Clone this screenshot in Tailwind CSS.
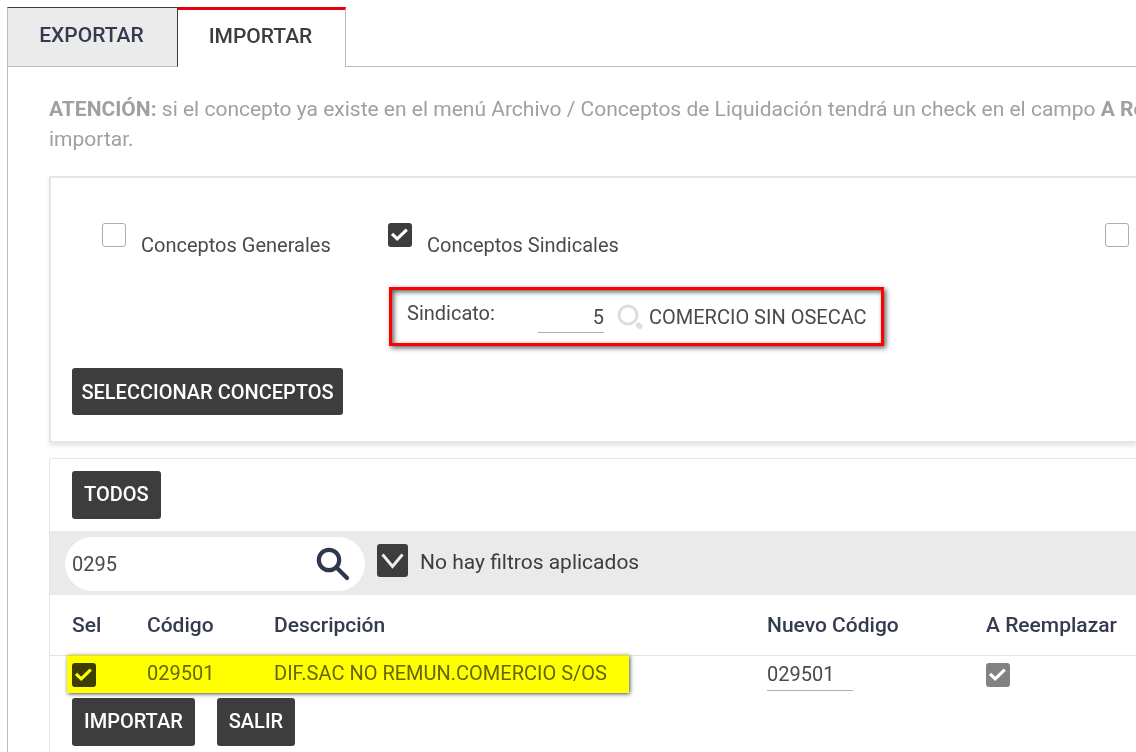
<!DOCTYPE html>
<html lang="es">
<head>
<meta charset="utf-8">
<meta name="viewport" content="width=device-width, initial-scale=1">
<title>Importar conceptos</title>
<script src="https://cdn.jsdelivr.net/npm/@tailwindcss/browser@4"></script>
</head>
<body class="overflow-hidden bg-white font-[Roboto,sans-serif] text-[20px] leading-6 text-[#4a4a4a]">
<svg class="hidden" aria-hidden="true">
  <symbol id="tick" viewBox="0 0 24 24"><path d="M4 10.8 9.2 15.8 18.8 6.6" fill="none" stroke="currentColor" stroke-width="3.2"/></symbol>
</svg>
<div class="flex min-h-screen flex-col pt-[7px] pl-[7px]">
  <nav class="flex" role="tablist" aria-label="Conceptos">
    <button role="tab" aria-selected="false" class="h-[60px] w-[171px] border-t border-r border-b border-l border-t-[#3d3d3d] border-r-[#3d3d3d] border-b-[#bdbdbd] border-l-[#bdbdbd] bg-[#ebebeb] pr-0.5 pb-1 text-[21px] font-medium text-[#343a50]">EXPORTAR</button>
    <button role="tab" aria-selected="true" class="h-[60px] w-[168px] border-t-3 border-r border-t-[#e60012] border-r-[#bdbdbd] bg-white pr-0.5 pb-1.5 text-[21px] font-medium text-[#3d3d3d]">IMPORTAR</button>
    <div class="flex-1 border-b border-[#bdbdbd]"></div>
  </nav>

  <main class="flex-1 overflow-hidden border-l border-[#bdbdbd] pt-[27px] pl-[41px]">
    <p class="text-[21px] leading-[30px] whitespace-nowrap text-[#a0a0a0]"><b>ATENCIÓN:</b> si el concepto ya existe en el menú Archivo / Conceptos de Liquidación tendrá un check en el campo <b>A Reemplazar</b><br>importar.</p>

    <section class="mt-[22px] border-2 border-r-0 border-[#e6e6e6] pt-[45px] pb-[26px] pl-[21px] shadow-[0_3px_4px_#0000001a]">
      <div class="grid grid-cols-[286px_717px_max-content] gap-y-[30px] pl-[30px]">
        <label class="flex items-start gap-[15px]">
          <input type="checkbox" class="size-6 shrink-0 appearance-none rounded-[3px] border border-[#adadad] bg-white">
          <span class="pt-[10px]">Conceptos Generales</span>
        </label>
        <label class="flex items-start gap-[15px]">
          <span class="grid shrink-0 text-white">
            <input type="checkbox" checked class="col-start-1 row-start-1 size-6 appearance-none rounded-[3px] bg-[#3d3d3d]">
            <svg class="pointer-events-none col-start-1 row-start-1 size-6"><use href="#tick"/></svg>
          </span>
          <span class="pt-[10px]">Conceptos Sindicales</span>
        </label>
        <input type="checkbox" aria-label="Otros conceptos" class="size-6 appearance-none rounded-[3px] border border-[#adadad] bg-white">

        <div class="col-start-2 ml-px flex h-[59px] w-[495px] items-start border-3 border-[#f00] pt-[11px] pl-[15px] shadow-[2px_2px_5px_#000000a0,inset_2px_2px_5px_#000000a0]">
          <label for="sindicato" class="w-[131px]">Sindicato:</label>
          <input id="sindicato" type="text" value="5" class="h-8 w-[66px] border-b border-[#adadad] text-right outline-none">
          <button aria-label="Buscar sindicato" class="mt-[3px] ml-[13px] text-[#dedede]">
            <svg class="size-[26px]" viewBox="0 0 26 26" fill="none" stroke="currentColor"><circle cx="11" cy="11" r="9" stroke-width="3"/><path d="M21.5 21.2 22.8 22.3" stroke-width="5.5" stroke-linecap="round"/></svg>
          </button>
          <span class="mt-1 ml-[6px]">COMERCIO SIN OSECAC</span>
        </div>
      </div>
      <button class="mt-[22px] h-[47px] w-[271px] rounded-[3px] bg-[#3d3d3d] font-medium text-white">SELECCIONAR CONCEPTOS</button>
    </section>

    <section class="mt-[15px] rounded-tl-[3px] border-t border-l border-[#e4e4e4] pb-3">
      <div class="py-3 pl-[22px]">
        <button class="block h-12 rounded-[3px] bg-[#3d3d3d] px-3 pb-0.5 font-medium text-white">TODOS</button>
      </div>
      <div class="flex h-16 items-start bg-[#eaeaea] pt-[6px] pl-[15px]">
        <div class="flex h-[54px] w-[300px] items-center rounded-full bg-white pr-[15px] pl-[7px]">
          <input type="text" aria-label="Buscar" value="0295" class="min-w-0 flex-1 outline-none">
          <button aria-label="Buscar" class="text-[#2f3750]">
            <svg class="size-[34px]" viewBox="0 0 34 34" fill="none" stroke="currentColor"><circle cx="13" cy="13" r="10.2" stroke-width="4.2"/><path d="M20.5 20.5 31 31" stroke-width="4.2" stroke-linecap="round"/></svg>
          </button>
        </div>
        <button aria-label="Mostrar filtros" class="mt-[7px] ml-3 rounded-[3px] bg-[#3d3d3d] text-[#eee]">
          <svg class="block h-[33px] w-[31px]" viewBox="0 0 31 33" fill="none" stroke="currentColor" stroke-width="3"><path d="M5.5 10.5 15.5 22.5 25.5 10.5"/></svg>
        </button>
        <span class="mt-[13px] ml-3 text-[21px] text-[#3d3d3d]">No hay filtros aplicados</span>
      </div>

      <div class="relative">
        <table class="w-full table-fixed text-left">
          <colgroup><col class="w-[97px]"><col class="w-[127px]"><col class="w-[493px]"><col class="w-[219px]"><col></colgroup>
          <thead>
            <tr class="h-[60px] border-b border-[#e4e4e4] text-[21px] whitespace-nowrap text-[#343a50]">
              <th class="pl-[22px] font-medium">Sel</th><th class="font-medium">Código</th><th class="font-medium">Descripción</th><th class="font-medium">Nuevo Código</th><th class="font-medium">A Reemplazar</th>
            </tr>
          </thead>
          <tbody>
            <tr class="h-[43px] align-top text-[#666]">
              <td class="pt-[7px] pl-[22px]">
                <span class="grid w-6 text-white">
                  <input type="checkbox" checked aria-label="Seleccionar 029501" class="col-start-1 row-start-1 size-6 appearance-none rounded-[3px] bg-[#3d3d3d]">
                  <svg class="pointer-events-none col-start-1 row-start-1 size-6"><use href="#tick"/></svg>
                </span>
              </td>
              <td class="pt-[5px]">029501</td>
              <td class="pt-[5px]">DIF.SAC NO REMUN.COMERCIO S/OS</td>
              <td class="pt-[3px]"><input type="text" value="029501" aria-label="Nuevo código" class="block h-8 w-[86px] border-b border-[#adadad] text-[#4a4a4a] outline-none"></td>
              <td class="pt-[7px]">
                <span class="grid w-6 text-white">
                  <input type="checkbox" checked disabled aria-label="A reemplazar 029501" class="col-start-1 row-start-1 size-6 appearance-none rounded-[3px] bg-[#828282]">
                  <svg class="pointer-events-none col-start-1 row-start-1 size-6"><use href="#tick"/></svg>
                </span>
              </td>
            </tr>
          </tbody>
        </table>
        <div class="pointer-events-none absolute top-[60px] left-[17px] h-[38px] w-[562px] bg-[#ff0] mix-blend-multiply shadow-[1px_1px_4px_#000000b0]"></div>
      </div>
      <div class="flex gap-[22px] pl-[22px]">
        <button class="h-12 rounded-[3px] bg-[#3d3d3d] px-3 pb-0.5 font-medium text-white">IMPORTAR</button>
        <button class="h-12 rounded-[3px] bg-[#3d3d3d] px-3 pb-0.5 font-medium text-white">SALIR</button>
      </div>
    </section>
  </main>
</div>
</body>
</html>
